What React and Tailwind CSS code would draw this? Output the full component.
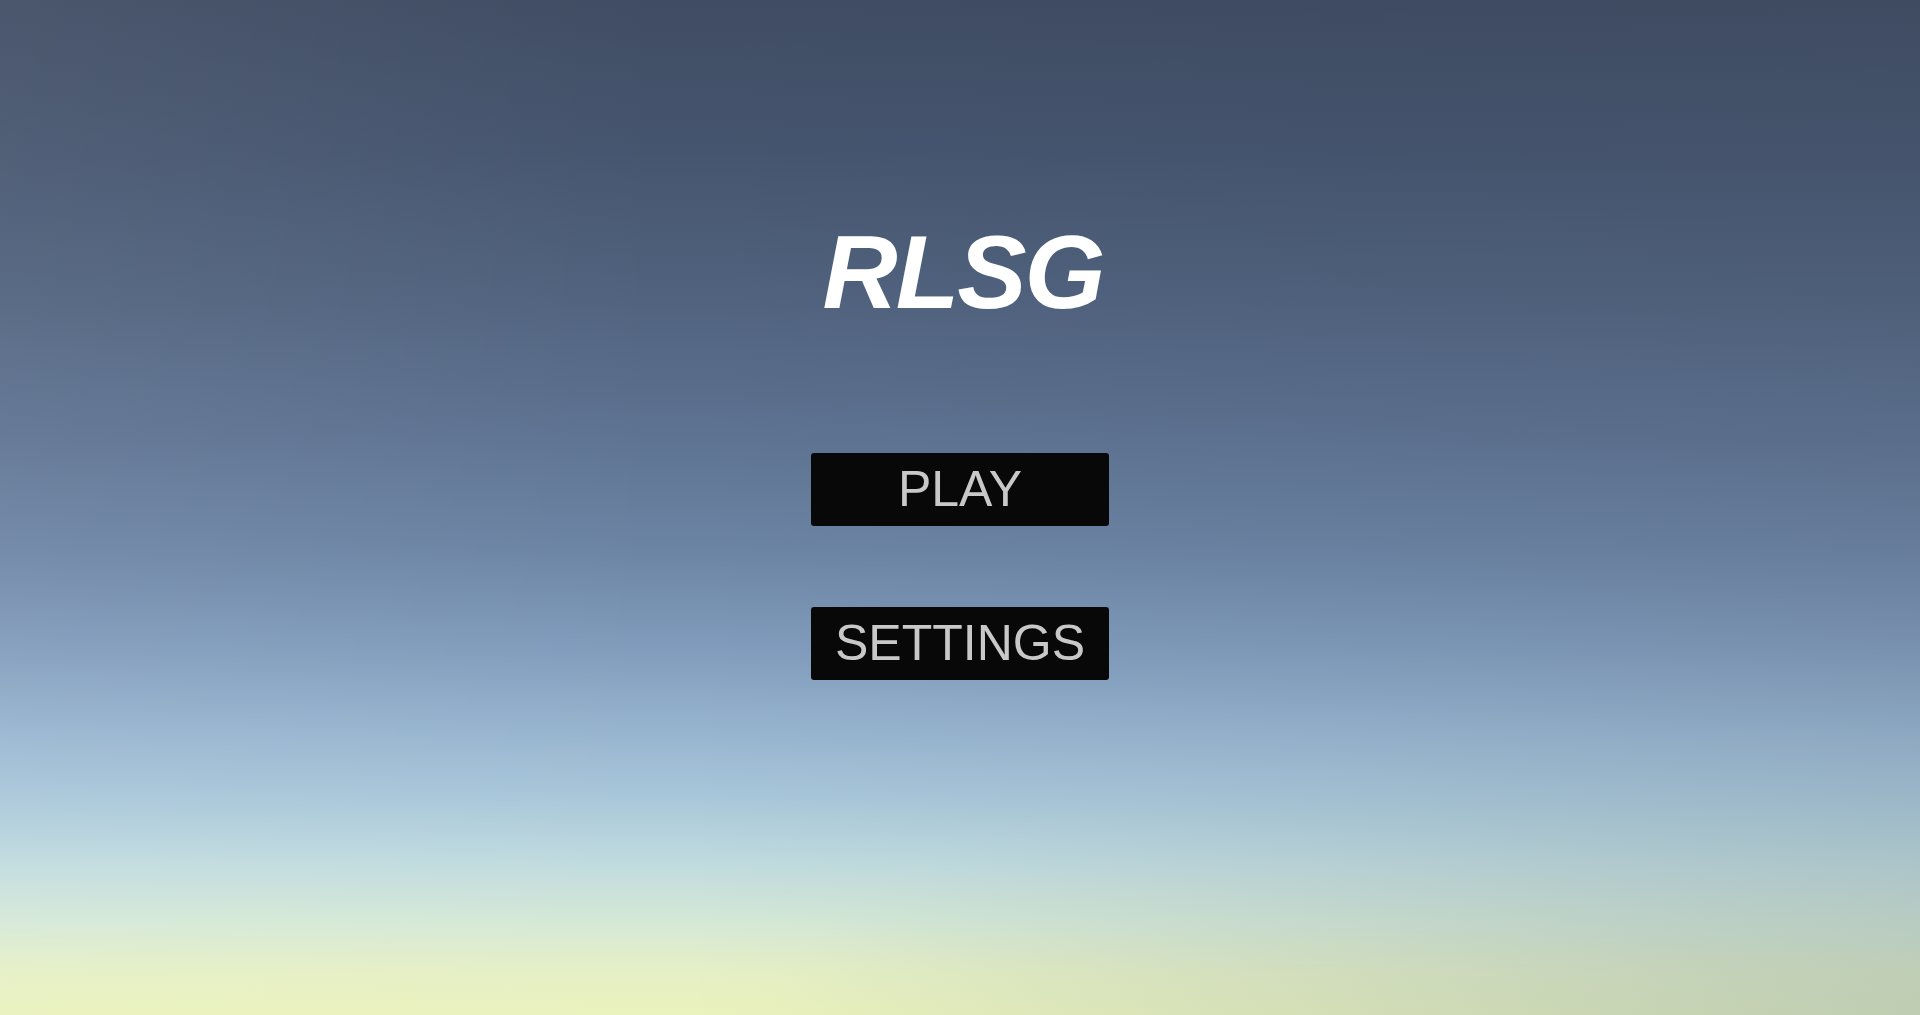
export default function App() {
  return (
    <div className="relative h-[1015px] w-full overflow-hidden bg-[linear-gradient(180deg,#3f4c63_0%,#46556f_15%,#51637f_30%,#5e7392_43%,#6c84a4_54%,#819cbc_64%,#97b4cf_72%,#aac8da_79%,#c0dbdf_85%,#d6e9d6_91%,#e6f0c4_96%,#eaf2bd_100%)]">
      <div className="absolute inset-0 bg-[linear-gradient(90deg,rgba(255,255,255,0.06)_0%,rgba(255,255,255,0)_35%,rgba(40,50,70,0.05)_70%,rgba(60,70,85,0.12)_100%)]" />
      <div className="absolute inset-0 bg-[radial-gradient(ellipse_60%_30%_at_100%_100%,rgba(150,175,180,0.35)_0%,rgba(150,175,180,0)_100%)]" />
      <div className="relative flex flex-col items-center pt-[220px] font-['Liberation_Sans',Arial,sans-serif]">
        <h1 className="ml-[6px] text-[104px] leading-[104px] font-bold italic tracking-[-2px] text-white">RLSG</h1>
        <button className="mt-[129px] flex h-[73px] w-[298px] items-center justify-center rounded-[3px] bg-[#080808] text-[50px] leading-[73px] text-[#c8c8c8]">
          PLAY
        </button>
        <button className="mt-[81px] flex h-[73px] w-[298px] items-center justify-center rounded-[3px] bg-[#080808] text-[50px] leading-[73px] text-[#c8c8c8]">
          SETTINGS
        </button>
      </div>
    </div>
  );
}
